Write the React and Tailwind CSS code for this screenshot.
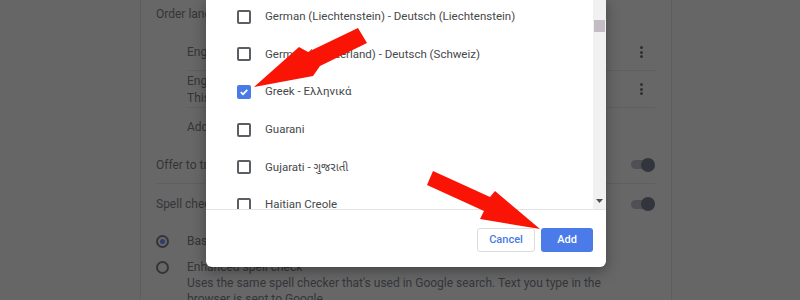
const languages = [
  { name: 'German (Liechtenstein) - Deutsch (Liechtenstein)', checked: false },
  { name: 'German (Switzerland) - Deutsch (Schweiz)', checked: false },
  { name: 'Greek - Ελληνικά', checked: true },
  { name: 'Guarani', checked: false },
  { name: 'Gujarati - ગુજરાતી', checked: false },
  { name: 'Haitian Creole', checked: false },
];

const Kebab = () => (
  <div className="flex flex-col items-center gap-[1.5px]">
    <span className="w-[3px] h-[3px] rounded-full bg-[#2e2f31]" />
    <span className="w-[3px] h-[3px] rounded-full bg-[#2e2f31]" />
    <span className="w-[3px] h-[3px] rounded-full bg-[#2e2f31]" />
  </div>
);

const Toggle = () => (
  <div className="relative w-[24px] h-[14px] flex items-center">
    <div className="w-[22px] h-[9px] rounded-full bg-[#4e5054]" />
    <div className="absolute right-0 w-[14px] h-[14px] rounded-full bg-[#32353c]" />
  </div>
);

const Checkbox = ({ checked }) =>
  checked ? (
    <div className="w-[14px] h-[14px] rounded-[2px] bg-[#4a7ae6] flex items-center justify-center">
      <svg width="10" height="10" viewBox="0 0 10 10">
        <path d="M1.8 5.2 L4 7.3 L8.3 2.8" fill="none" stroke="white" strokeWidth="1.8" />
      </svg>
    </div>
  ) : (
    <div className="w-[14px] h-[14px] rounded-[2px] border-2 border-[#5b5e62]" />
  );

const Background = () => (
  <div className="flex h-[300px] bg-[#666666] text-[#333537] text-[12px]">
    <div className="w-[140px] shrink-0" />
    <div className="w-[532px] shrink-0 border-x border-[#5e5e5e] bg-[#676767] pl-[15px] pr-[16px] flex flex-col">
      <div className="h-[28px] shrink-0 flex items-center">Order languages based on your preference</div>
      <div className="pl-[31px] flex flex-col">
        <div className="h-[43px] shrink-0 flex items-center justify-between border-b border-[#5f5f5f] pt-[6px]">
          <span>English (United States)</span>
          <div className="pr-[12px]"><Kebab /></div>
        </div>
        <div className="h-[37px] shrink-0 flex items-center justify-between border-b border-[#5f5f5f]">
          <div className="flex flex-col leading-[17px] pt-[1px]">
            <span>English</span>
            <span>This language is used to display the Google Chrome UI</span>
          </div>
          <div className="pr-[12px]"><Kebab /></div>
        </div>
        <div className="h-[38px] shrink-0 flex items-center">Add languages</div>
      </div>
      <div className="h-[38px] shrink-0 flex items-center justify-between border-b border-[#5f5f5f]">
        <span>Offer to translate pages that aren't in a language you read</span>
        <Toggle />
      </div>
      <div className="h-[40px] shrink-0 flex items-center justify-between">
        <span>Spell check for websites</span>
        <Toggle />
      </div>
      <div className="flex items-center h-[26px] shrink-0 mt-[4px]">
        <div className="w-[31px] flex">
          <div className="w-[13px] h-[13px] rounded-full border-2 border-[#33353a] flex items-center justify-center">
            <div className="w-[5px] h-[5px] rounded-full bg-[#2e3d6b]" />
          </div>
        </div>
        <span>Basic spell check</span>
      </div>
      <div className="flex items-center h-[26px] shrink-0">
        <div className="w-[31px] flex">
          <div className="w-[13px] h-[13px] rounded-full border-2 border-[#33353a]" />
        </div>
        <span>Enhanced spell check</span>
      </div>
      <div className="pl-[31px] leading-[16px] text-[#34363a] mt-[-5px]">
        <div>Uses the same spell checker that's used in Google search. Text you type in the</div>
        <div>browser is sent to Google.</div>
      </div>
    </div>
    <div className="flex-1" />
  </div>
);

const Dialog = () => (
  <div className="absolute left-[206px] top-[-2px] w-[400px] h-[269px] bg-white rounded-b-[6px] shadow-[0_4px_14px_rgba(0,0,0,0.35)] flex flex-col">
    <div className="h-[212px] flex border-b border-[#e3e3e3] overflow-hidden">
      <div className="flex-1 flex flex-col pl-[31px]">
        {languages.map((l) => (
          <div key={l.name} className="h-[37.6px] shrink-0 flex items-center gap-[14px] text-[11.5px] text-[#46484b]">
            <Checkbox checked={l.checked} />
            <span>{l.name}</span>
          </div>
        ))}
      </div>
      <div className="w-[13px] bg-[#f1f1f1] flex flex-col items-center">
        <div className="mt-[22px] w-[11px] h-[12px] bg-[#c4bcc4]" />
        <div className="flex-1" />
        <svg width="7" height="4" viewBox="0 0 7 4" className="mb-[6px]">
          <path d="M0 0 L7 0 L3.5 4 Z" fill="#505050" />
        </svg>
      </div>
    </div>
    <div className="flex-1 flex items-center justify-end gap-[6px] pr-[13px] pt-[3px]">
      <button className="w-[58px] h-[24px] rounded-[3px] border border-[#dadce0] text-[#4a7ae6] text-[11px] font-medium">
        Cancel
      </button>
      <button className="w-[52px] h-[24px] rounded-[3px] bg-[#4a7be8] text-white text-[11px] font-medium">
        Add
      </button>
    </div>
  </div>
);

const Arrows = () => (
  <svg className="absolute inset-0 pointer-events-none" width="800" height="300" viewBox="0 0 800 300">
    <polygon points="358,28 367,43 320,66 313,76 254,87 299,47 308,52" fill="#fa1405" />
    <polygon points="433,171 490,197 495,191 540,229 480,219 484,211 427,185" fill="#fa1405" />
  </svg>
);

export default function App() {
  return (
    <div className="relative w-[800px] h-[300px] overflow-hidden" style={{ fontFamily: 'Roboto, "Noto Sans", "Noto Sans Gujarati", "Lohit Gujarati", sans-serif' }}>
      <Background />
      <Dialog />
      <Arrows />
    </div>
  );
}
